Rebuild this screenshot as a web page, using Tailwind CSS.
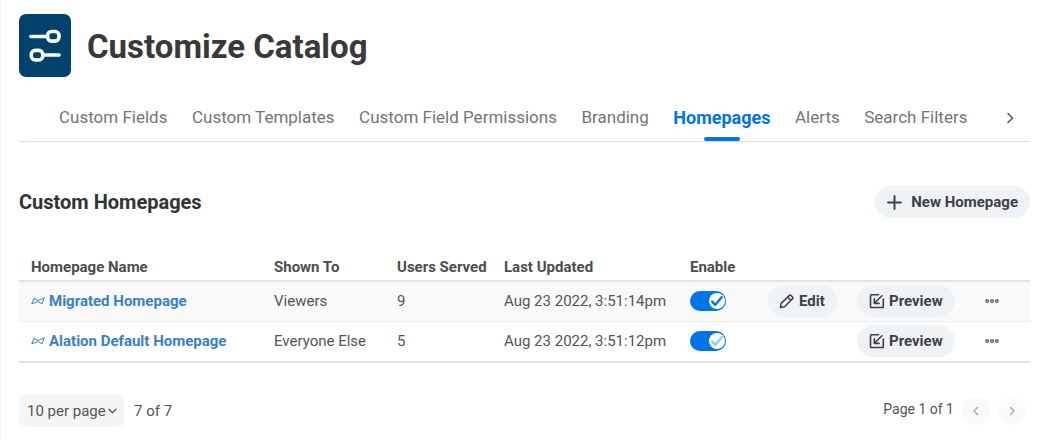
<!DOCTYPE html>
<html lang="en">
<head>
<meta charset="utf-8">
<meta name="viewport" content="width=device-width, initial-scale=1">
<title>Customize Catalog</title>
<script src="https://cdn.jsdelivr.net/npm/@tailwindcss/browser@4"></script>
</head>
<body class="bg-white font-['Roboto',sans-serif] text-[15px] text-[#555]">
<svg class="hidden" aria-hidden="true">
  <symbol id="preview" viewBox="0 0 16 16"><path d="M9.5 1.8H2.2a.7.7 0 0 0-.7.7v11.3c0 .4.3.7.7.7h11.4c.4 0 .7-.3.7-.7V6M13 2.8 5.8 9.8M5.3 5.8v4.6h4.8" fill="none" stroke="currentColor" stroke-width="1.6" stroke-linecap="round" stroke-linejoin="round"/></symbol>
  <symbol id="bowtie" viewBox="0 0 14 8"><path d="M3 1 .8 6.8 6.2 4.8 7.8 4.8 11 6.8 13.2.8 8 3.2 6.2 3.2Z" fill="none" stroke="currentColor" stroke-width="1" stroke-linejoin="round"/></symbol>
  <symbol id="dots" viewBox="0 0 14 6"><g fill="#b5b5b5" stroke="#666" stroke-width="1.2"><circle cx="2.2" cy="3" r="1.4"/><circle cx="7" cy="3" r="1.4"/><circle cx="11.8" cy="3" r="1.4"/></g></symbol>
  <symbol id="check" viewBox="0 0 16 16"><circle cx="8" cy="8" r="8" fill="#fff"/><path d="m3.2 8.6 3.1 3.2 6.4-7.6" fill="none" stroke="currentColor" stroke-width="2.4" stroke-linecap="round" stroke-linejoin="round"/></symbol>
</svg>
<main class="min-h-screen border-l border-[#f2f3f4] pt-[14px] pr-[14px] pl-[18px]">
  <header class="flex items-center gap-4">
    <svg class="h-[63px] w-[52px]" viewBox="0 0 52 63" aria-hidden="true">
      <rect width="52" height="63" rx="7" fill="#00426b"/>
      <g fill="none" stroke="#fff" stroke-width="3.6" stroke-linecap="round"><path d="M12 22.5h15"/><rect x="28.5" y="17.5" width="11.5" height="9.6" rx="4"/><rect x="12.3" y="36.4" width="11.5" height="9.6" rx="4"/><path d="M25 41h15"/></g>
    </svg>
    <h1 class="pt-0.5 text-[33px] font-bold text-[#393939]">Customize Catalog</h1>
  </header>

  <nav class="mt-4 flex h-[49px] items-center justify-between border-b border-[#d9e1e6] pt-0.5 pr-[14px] pl-10 text-[17px] text-[#757575]">
    <a href="#">Custom Fields</a>
    <a href="#">Custom Templates</a>
    <a href="#">Custom Field Permissions</a>
    <a href="#">Branding</a>
    <a href="#" aria-current="page" class="flex h-full flex-col items-center justify-end gap-[6px] text-[18px] font-bold text-[#0073e6]">Homepages<span class="h-1 w-9 rounded-full bg-[#0073e6]"></span></a>
    <a href="#">Alerts</a>
    <a href="#">Search Filters</a>
    <button type="button" class="ml-3 text-[#555]" aria-label="More tabs"><svg class="h-3 w-3" viewBox="0 0 12 12" aria-hidden="true"><path d="m4 1.5 4.5 4.5L4 10.5" fill="none" stroke="currentColor" stroke-width="1.6" stroke-linecap="round" stroke-linejoin="round"/></svg></button>
  </nav>

  <section class="mt-11">
    <div class="flex items-center justify-between">
      <h2 class="text-[20px] font-bold text-[#333]">Custom Homepages</h2>
      <button type="button" class="flex h-8 items-center gap-[9px] rounded-full bg-[#f0f3f6] px-3 font-bold text-[#40404a]">
        <svg class="h-[15px] w-[15px]" viewBox="0 0 14 14" aria-hidden="true"><path d="M7 1v12M1 7h12" stroke="currentColor" stroke-width="1.8" stroke-linecap="round"/></svg>
        New Homepage
      </button>
    </div>

    <table class="mt-[35px] w-full table-fixed border-collapse text-left whitespace-nowrap">
      <colgroup><col><col class="w-[123px]"><col class="w-[107px]"><col class="w-[186px]"><col class="w-[77px]"><col class="w-[90px]"><col class="w-[122px]"><col class="w-[63px]"></colgroup>
      <thead>
        <tr class="h-7 border-b-2 border-[#e3e3e3] font-bold text-[#4d4d4d] *:pt-0.5">
          <th class="pl-3">Homepage Name</th><th class="pl-3">Shown To</th><th class="pl-3">Users Served</th><th class="pl-3">Last Updated</th><th class="pl-3">Enable</th><td></td><td></td><td></td>
        </tr>
      </thead>
      <tbody>
        <tr class="h-10 border-b border-[#ececec] bg-[#f9f9f9]">
          <td class="pl-3"><a href="#" class="flex items-center gap-1 font-bold text-[#3980c6]"><svg class="h-2 w-[14px]" aria-hidden="true"><use href="#bowtie"/></svg>Migrated Homepage</a></td>
          <td class="pl-3">Viewers</td><td class="pl-3">9</td><td class="pl-3">Aug 23 2022, 3:51:14pm</td>
          <td class="pl-3"><label class="flex h-5 w-9 items-center justify-end rounded-full bg-[#0073e6] pr-px text-[#0073e6]"><input type="checkbox" checked class="sr-only" aria-label="Enable Migrated Homepage"><svg class="h-4 w-4" aria-hidden="true"><use href="#check"/></svg></label></td>
          <td class="pl-3"><button type="button" class="flex h-8 items-center gap-[5px] rounded-full bg-[#f0f3f6] px-3 font-bold text-[#40404a]"><svg class="h-[15px] w-[15px]" viewBox="0 0 16 16" aria-hidden="true"><path d="M1.5 14.5 2.3 10 10.8 1.7a1.5 1.5 0 0 1 2.1 0l1.4 1.4a1.5 1.5 0 0 1 0 2.1L5.9 13.6ZM9.3 3.4l3.3 3.3" fill="none" stroke="currentColor" stroke-width="1.6" stroke-linejoin="round"/></svg>Edit</button></td>
          <td class="pl-3"><button type="button" class="flex h-8 items-center gap-1 rounded-full bg-[#f0f3f6] px-3 font-bold text-[#40404a]"><svg class="h-4 w-4" aria-hidden="true"><use href="#preview"/></svg>Preview</button></td>
          <td class="pl-[18px]"><button type="button" class="block" aria-label="More actions for Migrated Homepage"><svg class="h-[6px] w-[14px]" aria-hidden="true"><use href="#dots"/></svg></button></td>
        </tr>
        <tr class="h-[41px] border-b-2 border-[#e3e3e3]">
          <td class="pl-3"><a href="#" class="flex items-center gap-1 font-bold text-[#3980c6]"><svg class="h-2 w-[14px]" aria-hidden="true"><use href="#bowtie"/></svg>Alation Default Homepage</a></td>
          <td class="pl-3">Everyone Else</td><td class="pl-3">5</td><td class="pl-3">Aug 23 2022, 3:51:12pm</td>
          <td class="pl-3"><label class="flex h-5 w-9 items-center justify-end rounded-full bg-[#0073e6] pr-px text-[#99c7f5]"><input type="checkbox" checked disabled class="sr-only" aria-label="Enable Alation Default Homepage"><svg class="h-4 w-4" aria-hidden="true"><use href="#check"/></svg></label></td>
          <td></td>
          <td class="pl-3"><button type="button" class="flex h-8 items-center gap-1 rounded-full bg-[#f0f3f6] px-3 font-bold text-[#40404a]"><svg class="h-4 w-4" aria-hidden="true"><use href="#preview"/></svg>Preview</button></td>
          <td class="pl-[18px]"><button type="button" class="block" aria-label="More actions for Alation Default Homepage"><svg class="h-[6px] w-[14px]" aria-hidden="true"><use href="#dots"/></svg></button></td>
        </tr>
      </tbody>
    </table>
  </section>

  <footer class="mt-8 flex items-center justify-between">
    <div class="flex items-center gap-[10px]">
      <div class="grid items-center rounded-md bg-[#f5f5f5]">
        <select aria-label="Rows per page" class="col-start-1 row-start-1 h-8 w-[105px] appearance-none pl-2"><option>10 per page</option></select>
        <svg class="pointer-events-none col-start-1 row-start-1 mr-[7px] h-2 w-[9px] justify-self-end" viewBox="0 0 9 8" aria-hidden="true"><path d="m1 2.2 3.5 3.5L8 2.2" fill="none" stroke="currentColor" stroke-width="1.3" stroke-linecap="round" stroke-linejoin="round"/></svg>
      </div>
      <span>7 of 7</span>
    </div>
    <div class="flex items-center gap-2 pr-1">
      <span class="pb-1 text-sm">Page 1 of 1</span>
      <button type="button" disabled aria-label="Previous page" class="flex h-7 w-7 items-center justify-center rounded-full bg-[#fafafa] text-[#aaa]"><svg class="h-[10px] w-[10px]" viewBox="0 0 10 10" aria-hidden="true"><path d="M7 1 3 5l4 4" fill="none" stroke="currentColor" stroke-width="1.4"/></svg></button>
      <button type="button" disabled aria-label="Next page" class="flex h-7 w-7 items-center justify-center rounded-full bg-[#fafafa] text-[#aaa]"><svg class="h-[10px] w-[10px]" viewBox="0 0 10 10" aria-hidden="true"><path d="m3 1 4 4-4 4" fill="none" stroke="currentColor" stroke-width="1.4"/></svg></button>
    </div>
  </footer>
</main>
</body>
</html>
